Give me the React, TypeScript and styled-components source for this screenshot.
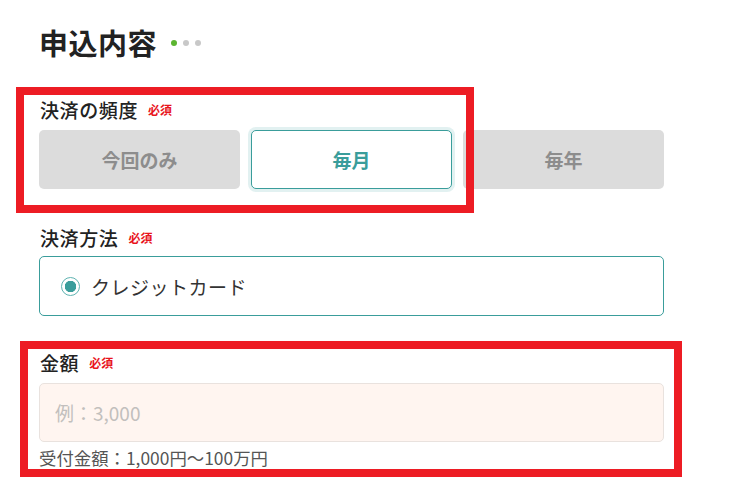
import styled, { createGlobalStyle } from 'styled-components'

// 申込フォーム（決済の頻度・方法・金額）

const GlobalStyle = createGlobalStyle`
  html, body {
    margin: 0;
    padding: 0;
    background: #fff;
  }
  body {
    font-family: 'Noto Sans CJK JP', 'Noto Sans', sans-serif;
    color: #222;
  }
`

const frequencies = ['今回のみ', '毎月', '毎年']

export default function App() {
  const selected = '毎月'
  return (
    <Page>
      <GlobalStyle />
      <Title>
        申込内容
        <Dots>
          <Dot active={true} />
          <Dot />
          <Dot />
        </Dots>
      </Title>

      <Label style={{ marginTop: 37 }}>
        決済の頻度<Required>必須</Required>
      </Label>
      <ChoiceRow>
        {frequencies.map((f) => (
          <Choice key={f} selected={f === selected}>
            {f}
          </Choice>
        ))}
      </ChoiceRow>

      <Label style={{ marginTop: 36 }}>
        決済方法<Required>必須</Required>
      </Label>
      <MethodCard>
        <Radio />
        クレジットカード
      </MethodCard>

      <Label style={{ marginTop: 34 }}>
        金額<Required>必須</Required>
      </Label>
      <AmountInput placeholder="例：3,000" />
      <Note>受付金額：1,000円〜100万円</Note>

      {/* 注釈の赤枠 */}
      <Highlight style={{ left: 16, top: 87, width: 458, height: 126 }} />
      <Highlight style={{ left: 20, top: 341, width: 662, height: 136 }} />
    </Page>
  )
}

const Page = styled.div`
  position: relative;
  width: 753px;
  height: 489px;
  box-sizing: border-box;
  padding: 24px 0 0 39px;
  overflow: hidden;
`

const Title = styled.h1`
  display: flex;
  align-items: center;
  margin: 0;
  font-size: 29px;
  line-height: 36px;
  font-weight: 700;
  color: #222;
  letter-spacing: 0.5px;
`

const Dots = styled.span`
  display: flex;
  gap: 6px;
  margin-left: 14px;
  margin-top: 2px;
`

const Dot = styled.span<{ active?: boolean }>`
  width: 6px;
  height: 6px;
  border-radius: 50%;
  background: ${(p) => (p.active ? '#5cb531' : '#c8c8c8')};
`

const Label = styled.div`
  display: flex;
  align-items: center;
  height: 24px;
  padding-left: 1px;
  font-size: 19px;
  font-weight: 500;
  color: #222;
  letter-spacing: 0.6px;
`

const Required = styled.span`
  margin-left: 10px;
  font-size: 12px;
  font-weight: 700;
  color: #e8141c;
  letter-spacing: 0;
`

const ChoiceRow = styled.div`
  display: grid;
  grid-template-columns: repeat(3, 201px);
  gap: 11px;
  margin-top: 9px;
`

const Choice = styled.div<{ selected?: boolean }>`
  display: flex;
  align-items: center;
  justify-content: center;
  height: 59px;
  box-sizing: border-box;
  border-radius: 5px;
  font-size: 19px;
  font-weight: 700;
  background: ${(p) => (p.selected ? '#fff' : '#dcdcdc')};
  color: ${(p) => (p.selected ? '#3a9d9b' : '#8d8d8d')};
  border: ${(p) => (p.selected ? '1px solid #3a9d9b' : 'none')};
  box-shadow: ${(p) => (p.selected ? '0 0 0 3px #e2f1f1' : 'none')};
`

const MethodCard = styled.div`
  display: flex;
  align-items: center;
  gap: 11px;
  width: 625px;
  height: 60px;
  box-sizing: border-box;
  margin-top: 7px;
  padding-left: 21px;
  border: 1px solid #3a9d9b;
  border-radius: 5px;
  font-size: 19px;
  color: #333;
  letter-spacing: 0.5px;
`

const Radio = styled.span`
  width: 19px;
  height: 19px;
  box-sizing: border-box;
  border-radius: 50%;
  border: 1.5px solid #5fb3b1;
  background: radial-gradient(circle, #3a9d9b 0 5.5px, #fff 6px);
`

const AmountInput = styled.input`
  display: block;
  width: 625px;
  height: 59px;
  box-sizing: border-box;
  margin-top: 9px;
  padding: 0 15px;
  border: 1px solid #e9e2de;
  border-radius: 5px;
  background: #fff5f0;
  font-family: 'Noto Sans CJK JP', 'Noto Sans', sans-serif;
  font-size: 19px;
  outline: none;
  &::placeholder {
    color: #c2bfbd;
  }
`

const Note = styled.div`
  margin-top: 6px;
  font-size: 17.4px;
  line-height: 20px;
  color: #555;
`

const Highlight = styled.div`
  position: absolute;
  box-sizing: border-box;
  border: 8px solid #ed1c24;
  pointer-events: none;
`
